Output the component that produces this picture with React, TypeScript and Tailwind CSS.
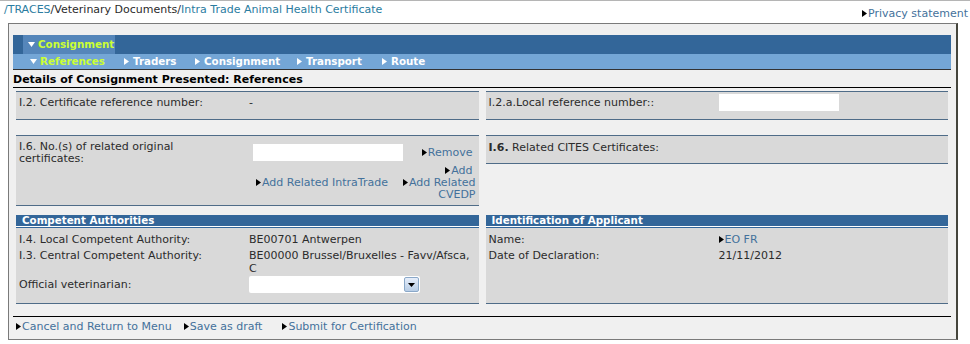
const Arr = ({ c = "#000" }: { c?: string }) => (
  <svg width="5" height="7" viewBox="0 0 5 7" className="mr-[1px] inline-block shrink-0 align-[0px]">
    <path d="M0 0L5 3.5L0 7Z" fill={c} />
  </svg>
);

const Down = ({ c }: { c: string }) => (
  <svg width="7" height="5" viewBox="0 0 7 5" className="mr-[3px] inline-block shrink-0 align-[1px]">
    <path d="M0 0L7 0L3.5 5Z" fill={c} />
  </svg>
);

const Link = ({ children, className = "" }: { children: React.ReactNode; className?: string }) => (
  <span className={`whitespace-nowrap text-[#44719b] ${className}`}>
    <Arr />
    {children}
  </span>
);

const Box = ({ className = "", children }: { className?: string; children?: React.ReactNode }) => (
  <div className={`box-border border-y border-[#4f6c88] bg-[#d9d9d9] ${className}`}>{children}</div>
);

const Header = ({ title }: { title: string }) => (
  <div className="box-border h-[12px] border-b border-white bg-[#336699] pl-[6px] text-[10.3px] font-bold leading-[11px] text-white">
    {title}
  </div>
);

const Row = ({ label, children }: { label: React.ReactNode; children?: React.ReactNode }) => (
  <div className="flex">
    <div className="w-[230px] shrink-0">{label}</div>
    <div>{children}</div>
  </div>
);

const tabs = [
  { t: "Traders", w: "w-[71px]" },
  { t: "Consignment", w: "w-[102px]" },
  { t: "Transport", w: "w-[85px]" },
  { t: "Route", w: "w-[60px]" },
];

export default function App() {
  return (
    <div
      className="h-[344px] w-[970px] bg-white text-[11px] leading-[13px] text-[#2b2b2b]"
      style={{ fontFamily: '"DejaVu Sans", Verdana, sans-serif' }}
    >
      <div className="flex h-[23px] items-start justify-between border-t border-[#b5b5b5] pl-[4px] pr-[2px]">
        <div className="pt-[2px]">
          <span className="text-[#2a7ca0]">/TRACES</span>/Veterinary Documents/
          <span className="text-[#2a7ca0]">Intra Trade Animal Health Certificate</span>
        </div>
        <div className="pt-[6px]">
          <Link>Privacy statement</Link>
        </div>
      </div>

      <div className="ml-[8px] box-border h-[317px] w-[950px] border border-r-2 border-[#7a7a7a] border-r-[#45453c] bg-[#f0f0f0] pl-[4px] pr-[5px] pt-[11px]">
        <div className="flex h-[19px] bg-[#336699] pl-[10px] text-[10.3px] font-bold">
          <div className="flex w-[92px] items-center bg-[#5586ba] pl-[5px] text-[#ccff33]">
            <Down c="#ffffff" />
            Consignment
          </div>
        </div>
        <div className="box-border flex h-[16px] items-center border-b border-[#333] bg-[#74a6d6] pl-[17px] text-[10.3px] font-bold text-white">
          <span className="flex w-[94px] items-center text-[#ccff33]">
            <Down c="#ffffff" />
            References
          </span>
          {tabs.map(({ t, w }) => (
            <span key={t} className={`flex items-center ${w}`}>
              <Arr c="#ffffff" />
              <span className="ml-[3px]">{t}</span>
            </span>
          ))}
        </div>

        <div className="border-b border-black pb-[1px] pt-[4px] font-bold leading-[12px] text-black">
          Details of Consignment Presented: References
        </div>

        <div className="px-[3px] pt-[3px]">
          <div className="grid grid-cols-2 gap-[7px]">
            <Box className="h-[29px] pl-[3px] pt-[4px]">
              <Row label="I.2. Certificate reference number:">-</Row>
            </Box>
            <Box className="h-[29px] pl-[3px] pt-[4px]">
              <Row label="I.2.a.Local reference number::">
                <div className="-mt-[2px] h-[17px] w-[120px] bg-white" />
              </Row>
            </Box>
          </div>

          <div className="mt-[15px] grid grid-cols-2 items-start gap-[7px]">
            <Box className="h-[71px] pl-[3px] pr-[3px]">
              <div className="flex">
                <div className="w-[230px] shrink-0 pt-[5px] leading-[12px]">
                  I.6. No.(s) of related original
                  <br />
                  certificates:
                </div>
                <div className="flex-1">
                  <div className="mt-[8px] flex items-center justify-between pr-[3px]">
                    <div className="ml-[4px] h-[17px] w-[150px] bg-white" />
                    <Link>Remove</Link>
                  </div>
                  <div className="mt-[3px] pr-[3px] text-right">
                    <Link>Add</Link>
                  </div>
                  <div className="flex items-start justify-between leading-[12px]">
                    <Link className="ml-[7px]">Add Related IntraTrade</Link>
                    <div className="text-right text-[#44719b]">
                      <Link>Add Related</Link>
                      <br />
                      CVEDP
                    </div>
                  </div>
                </div>
              </div>
            </Box>
            <Box className="h-[29px] pl-[3px] pt-[5px]">
              <b>I.6.</b> Related CITES Certificates:
            </Box>
          </div>

          <div className="mt-[9px] grid grid-cols-2 gap-[7px]">
            <div>
              <Header title="Competent Authorities" />
              <div className="box-border h-[77px] border-y border-[#4f6c88] border-t-[#336699] bg-[#d9d9d9] pl-[3px] pt-[5px]">
                <Row label="I.4. Local Competent Authority:">BE00701 Antwerpen</Row>
                <div className="mt-[3px]">
                  <Row label="I.3. Central Competent Authority:">
                    BE00000 Brussel/Bruxelles - Favv/Afsca,
                    <br />C
                  </Row>
                </div>
                <div className="mt-[1px] flex items-center">
                  <div className="w-[230px] shrink-0">Official veterinarian:</div>
                  <div className="flex h-[17px] w-[171px] items-center justify-end rounded-[2px] bg-white pr-[1px]">
                    <div className="flex h-[15px] w-[15px] items-center justify-center rounded-[2px] border border-[#8aa8c8] bg-gradient-to-b from-[#e6eefa] to-[#b8cde6]">
                      <svg width="7" height="4" viewBox="0 0 7 4">
                        <path d="M0 0L7 0L3.5 4Z" fill="#000" />
                      </svg>
                    </div>
                  </div>
                </div>
              </div>
            </div>
            <div>
              <Header title="Identification of Applicant" />
              <div className="box-border h-[77px] border-y border-[#4f6c88] border-t-[#336699] bg-[#d9d9d9] pl-[3px] pt-[5px]">
                <Row label="Name:">
                  <Link>EO FR</Link>
                </Row>
                <div className="mt-[3px]">
                  <Row label="Date of Declaration:">21/11/2012</Row>
                </div>
              </div>
            </div>
          </div>
        </div>

        <div className="mt-[12px] flex border-t border-black pl-[3px] pt-[3px]">
          <Link className="mr-[12px]">Cancel and Return to Menu</Link>
          <Link className="mr-[20px]">Save as draft</Link>
          <Link>Submit for Certification</Link>
        </div>
      </div>
    </div>
  );
}
